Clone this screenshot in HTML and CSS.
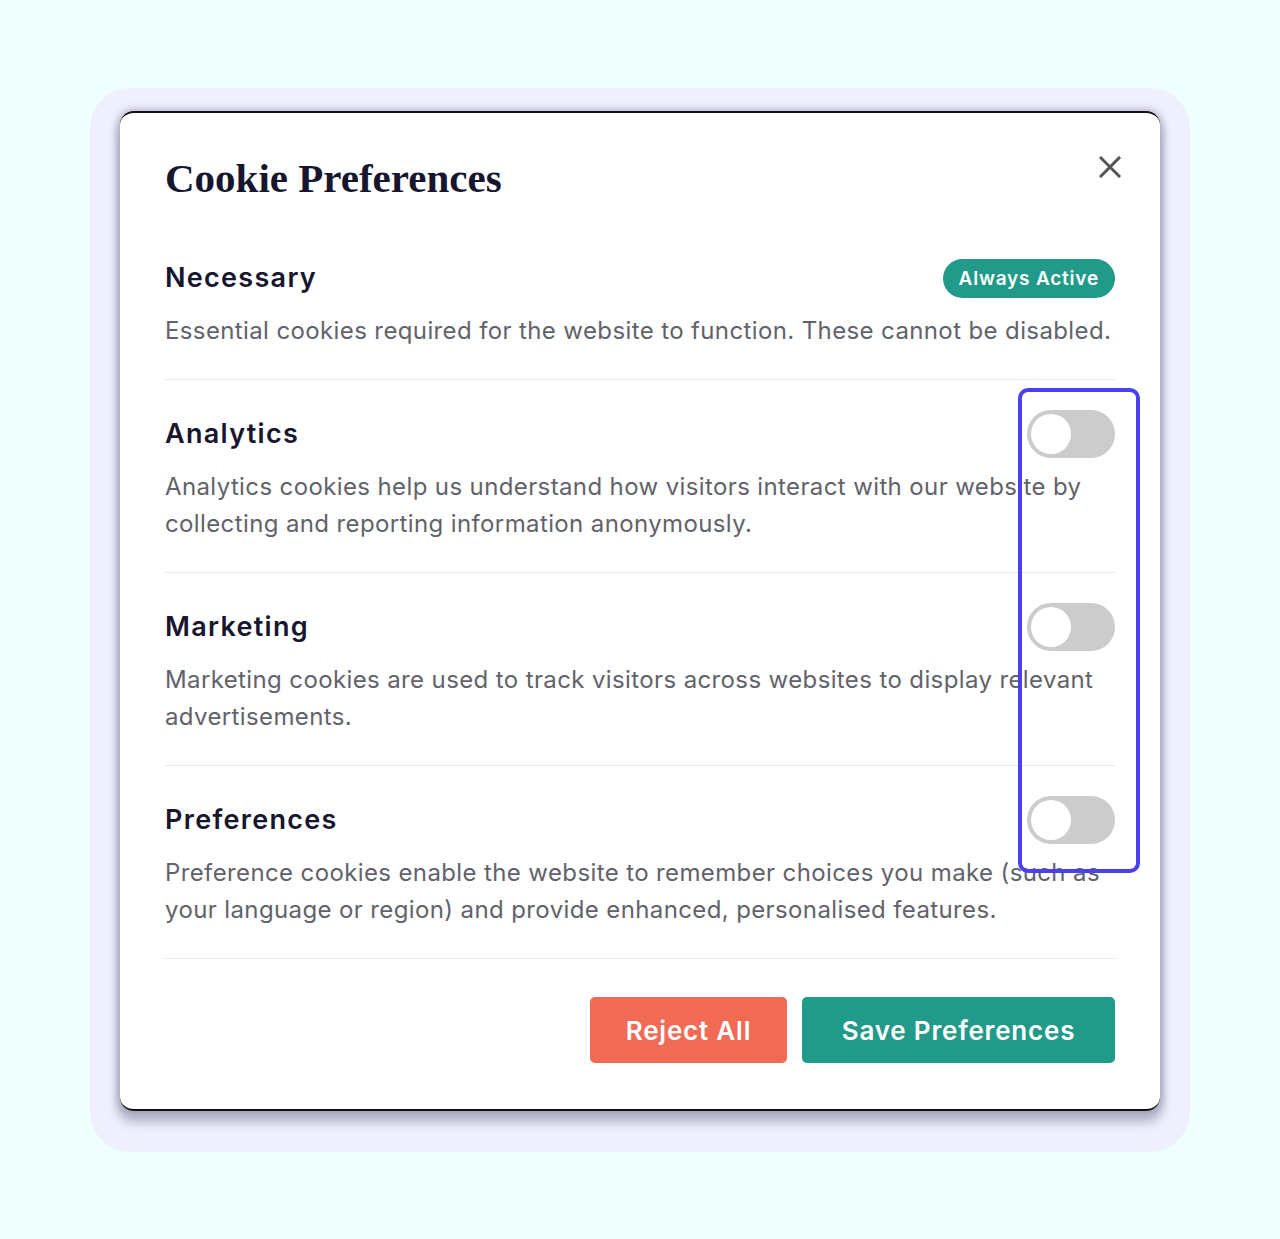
FILE: index.html
```html
<!DOCTYPE html>
<html lang="en">
<head>
  <meta charset="UTF-8" />
  <meta name="viewport" content="width=device-width, initial-scale=1.0" />
  <title>Cookie Preferences</title>
  <link rel="stylesheet" href="styles.css">
</head>
<body>

  <div class="frame">
    <div class="modal">
      <div class="modal-head">
        <h1>Cookie Preferences</h1>
        <button class="close-btn" aria-label="Close">
          <svg width="22" height="22" viewBox="0 0 22 22"><path d="M2 2L20 20M20 2L2 20" stroke="#555" stroke-width="3" stroke-linecap="square"/></svg>
        </button>
      </div>

      <div class="section">
        <div class="section-row">
          <h3>Necessary</h3>
          <span class="badge">Always Active</span>
        </div>
        <p>Essential cookies required for the website to function. These cannot be disabled.</p>
      </div>

      <div class="section">
        <div class="section-row">
          <h3>Analytics</h3>
          <span class="toggle"><span class="knob"></span></span>
        </div>
        <p>Analytics cookies help us understand how visitors interact with our website by collecting and reporting information anonymously.</p>
      </div>

      <div class="section">
        <div class="section-row">
          <h3>Marketing</h3>
          <span class="toggle"><span class="knob"></span></span>
        </div>
        <p>Marketing cookies are used to track visitors across websites to display relevant advertisements.</p>
      </div>

      <div class="section">
        <div class="section-row">
          <h3>Preferences</h3>
          <span class="toggle"><span class="knob"></span></span>
        </div>
        <p>Preference cookies enable the website to remember choices you make (such as your language or region) and provide enhanced, personalised features.</p>
      </div>

      <div class="actions">
        <button class="btn reject">Reject All</button>
        <button class="btn save">Save Preferences</button>
      </div>

      <div class="highlight"></div>
    </div>
  </div>

</body>
</html>
```

FILE: styles.css
```css
body {
  margin: 0;
  padding: 88px 0 0;
  background-color: #effffe;
  font-family: 'Inter', 'Noto Sans', sans-serif;
  display: flex;
  justify-content: center;
  align-items: flex-start;
  min-height: 1239px;
  box-sizing: border-box;
}

.frame {
  width: 1100px;
  box-sizing: border-box;
  padding: 23px 30px 41px;
  background-color: #efeffd;
  border-radius: 40px;
}

.modal {
  position: relative;
  background: white;
  border-top: 2px solid #111;
  border-bottom: 2px solid #111;
  border-radius: 14px;
  padding: 43px 45px 46px;
  box-shadow: 0 9px 10px 3px rgba(110, 110, 140, 0.4), 0 0 6px 3px rgba(120, 120, 150, 0.35);
}

.modal-head {
  display: flex;
  justify-content: space-between;
  align-items: flex-start;
  margin-bottom: 24px;
}

h1 {
  margin: 0;
  font-family: 'Liberation Serif', 'DejaVu Serif', serif;
  font-weight: bold;
  font-size: 41px;
  line-height: 44px;
  color: #16162e;
}

.close-btn {
  border: none;
  background: none;
  padding: 0;
  margin: 0 -6px 0 0;
  cursor: pointer;
  width: 22px;
  height: 22px;
}
.close-btn svg {
  display: block;
}

.section {
  padding: 30px 0;
  border-bottom: 1px solid #e8e8ea;
}
.section:first-of-type {
  padding-top: 0;
}

.section-row {
  display: flex;
  justify-content: space-between;
  align-items: center;
  height: 48px;
  margin-bottom: 10px;
}
.section:first-of-type .section-row {
  height: 46px;
}
.section-row h3 {
  margin-bottom: 2px;
}

h3 {
  margin: 0;
  font-size: 27px;
  font-weight: 600;
  letter-spacing: 1.3px;
  color: #16162e;
}

.section p {
  margin: 0;
  font-size: 24px;
  line-height: 37px;
  letter-spacing: 0.38px;
  color: #62626b;
}

.badge {
  background-color: #229a8a;
  color: white;
  font-size: 19px;
  font-weight: 600;
  letter-spacing: 0.8px;
  height: 39px;
  line-height: 39px;
  padding: 0 16px;
  border-radius: 20px;
}

.toggle {
  width: 88px;
  height: 48px;
  border-radius: 24px;
  background-color: #cccccc;
  box-sizing: border-box;
  padding: 4px;
  display: flex;
}
.knob {
  width: 40px;
  height: 40px;
  border-radius: 50%;
  background: white;
}

.actions {
  display: flex;
  justify-content: flex-end;
  gap: 15px;
  padding-top: 38px;
}

.btn {
  border: none;
  height: 66px;
  border-radius: 5px;
  color: white;
  font-family: 'Inter', 'Noto Sans', sans-serif;
  font-size: 26px;
  font-weight: 600;
  letter-spacing: 0.8px;
  cursor: pointer;
}
.reject {
  width: 197px;
  background-color: #f06a56;
}
.save {
  width: 313px;
  background-color: #229a8a;
}

.highlight {
  position: absolute;
  left: 898px;
  top: 275px;
  width: 114px;
  height: 477px;
  border: 4px solid #4b3ff0;
  border-radius: 10px;
  pointer-events: none;
}
```
